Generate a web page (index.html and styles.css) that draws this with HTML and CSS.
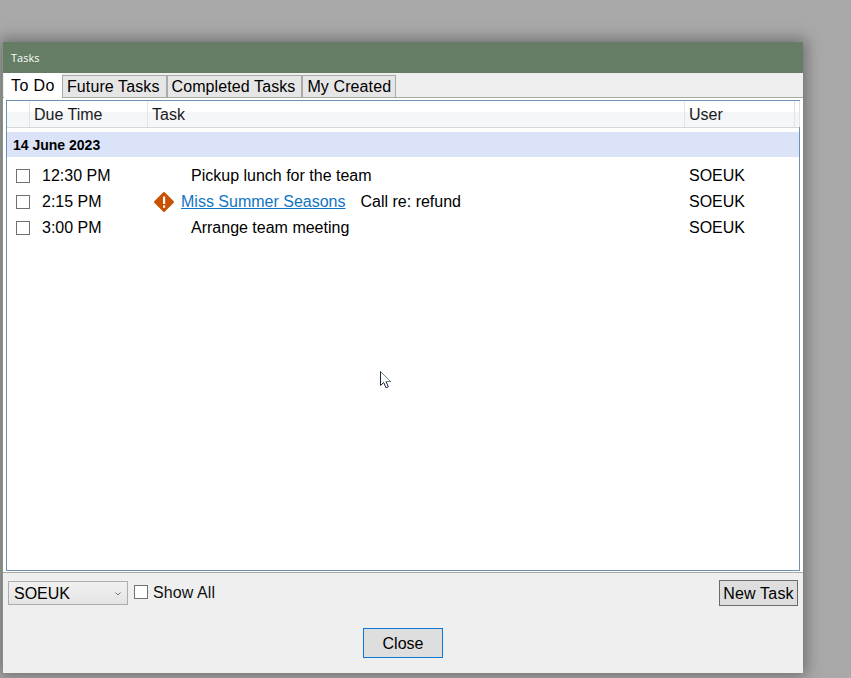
FILE: index.html
```html
<!DOCTYPE html>
<html lang="en">
<head>
<meta charset="utf-8">
<title>Tasks</title>
<link rel="stylesheet" href="styles.css">
</head>
<body>
<section class="window">
  <header class="titlebar">Tasks</header>
  <nav class="tabs">
    <span class="tab tab-active">To Do</span>
    <span class="tab">Future Tasks</span>
    <span class="tab">Completed Tasks</span>
    <span class="tab">My Created</span>
  </nav>
  <div class="panel">
    <div class="list">
      <div class="grid-row head">
        <span class="hcell"></span>
        <span class="hcell">Due Time</span>
        <span class="hcell">Task</span>
        <span class="hcell">User</span>
        <span class="hcell"></span>
      </div>
      <div class="date-row">14 June 2023</div>
      <div class="rows">
        <div class="grid-row task">
          <span class="cell-check"><span class="box"></span></span>
          <span class="cell-time">12:30 PM</span>
          <span class="cell-task indent">Pickup lunch for the team</span>
          <span class="cell-user">SOEUK</span>
        </div>
        <div class="grid-row task">
          <span class="cell-check"><span class="box"></span></span>
          <span class="cell-time">2:15 PM</span>
          <span class="cell-task">
            <svg class="alert" width="20" height="20" viewBox="0 0 20 20" aria-hidden="true">
              <path d="M10 1 19 10 10 19 1 10Z" fill="#ca5100" stroke="#ca5100" stroke-linejoin="round" stroke-width="2"/>
              <rect x="9" y="4.500" width="2.200" height="7.500" fill="#fff"/>
              <rect x="9" y="13.500" width="2.200" height="2.200" fill="#fff"/>
            </svg>
            <a class="link" href="#">Miss Summer Seasons</a>
            <span class="note">Call re: refund</span>
          </span>
          <span class="cell-user">SOEUK</span>
        </div>
        <div class="grid-row task">
          <span class="cell-check"><span class="box"></span></span>
          <span class="cell-time">3:00 PM</span>
          <span class="cell-task indent">Arrange team meeting</span>
          <span class="cell-user">SOEUK</span>
        </div>
      </div>
    </div>
  </div>
  <div class="toolbar">
    <div class="select"><span>SOEUK</span>
      <svg class="chev" width="6" height="4" viewBox="0 0 6 4" aria-hidden="true"><path d="M.5.5 3 3 5.500.5" fill="none" stroke="#777" stroke-width="1"/></svg>
    </div>
    <span class="box box-white"></span>
    <span class="show-all">Show All</span>
    <button class="btn-new" type="button">New Task</button>
  </div>
  <div class="actions">
    <button class="btn-close" type="button">Close</button>
  </div>
</section>
<svg class="cursor" width="14" height="20" viewBox="0 0 14 20" aria-hidden="true">
  <path d="M1.500 1.500V15.500L4.700 12.500 7 17.800 9.300 16.800 7 11.500H11.500Z" fill="#fff" stroke="#1a2340" stroke-width="1"/>
  <path d="M1.500 1.500 11.500 11.500H7" fill="none" stroke="#6f8a70" stroke-width="1"/>
</svg>
</body>
</html>
```
FILE: styles.css
```css
* { box-sizing: border-box; }
html, body { margin: 0; height: 100%; }
body {
  position: relative;
  overflow: hidden;
  background: #a9a9a9;
  font-family: "Liberation Sans", Arial, sans-serif;
  font-size: 16px;
  color: #000;
}
.window {
  position: absolute;
  left: 3px;
  top: 42px;
  width: 800px;
  height: 631px;
  display: flex;
  flex-direction: column;
  background: #efefef;
  box-shadow: -1px 0 0 #7f957f, 0 0 14px 3px rgba(60, 60, 60, .55);
}
.titlebar {
  height: 31px;
  padding: 9px 0 0 8px;
  background: #667d65;
  color: #fbfcfb;
  font-family: "Open Sans", sans-serif;
  font-size: 11px;
  line-height: 14px;
}
.tabs {
  height: 24px;
  padding-left: 1px;
  display: flex;
  align-items: flex-end;
}
.tab {
  height: 22px;
  padding: 0 6px 0 4px;
  line-height: 21px;
  letter-spacing: .1px;
  background: #e6e6e6;
  border: 1px solid #aaa;
  border-bottom: 0;
}
.tab:last-child { padding-right: 4px; }
.tab-active {
  position: relative;
  z-index: 1;
  height: 25px;
  margin-bottom: -1px;
  padding: 0 0 0 7px;
  width: 58px;
  line-height: 25px;
  letter-spacing: .4px;
  background: #fff;
  border: 0;
}
.panel {
  height: 476px;
  padding: 2px 3px;
  background: #fff;
  border-top: 1px solid #a8a8a8;
  border-bottom: 1px solid #a8a8a8;
}
.list {
  height: 471px;
  border: 1px solid #6f8fb3;
  background: #fff;
}
.grid-row {
  display: grid;
  grid-template-columns: 23px 118px 537px 110px 5px;
  align-items: center;
}
.head {
  height: 27px;
  background: linear-gradient(#fff 0, #fff 40%, #f4f5f7 45%, #f6f7f8 100%);
  border-bottom: 1px solid #d6d6d6;
}
.hcell {
  height: 26px;
  padding-left: 4px;
  line-height: 28px;
  color: #1a1a1a;
  border-right: 1px solid #e3e3e3;
}
.date-row {
  height: 25px;
  margin-top: 4px;
  padding-left: 6px;
  line-height: 26px;
  background: #dbe3f9;
  font-size: 14px;
  font-weight: 700;
}
.rows { padding-top: 6px; }
.task { height: 26px; }
.cell-check { padding-left: 9px; display: flex; }
.box {
  display: block;
  width: 14px;
  height: 14px;
  border: 1px solid #707070;
  background: #fff;
}
.cell-time { padding-left: 12px; }
.cell-task {
  display: flex;
  align-items: center;
  padding-left: 6px;
}
.indent { padding-left: 43px; }
.alert { flex: none; }
.link { margin-left: 7px; color: #0f74c4; text-decoration: underline; }
.note { margin-left: 15px; }
.cell-user { padding-left: 4px; }
.toolbar {
  height: 43px;
  padding: 7px 5px 0 5px;
  display: flex;
  align-items: flex-start;
}
.select {
  width: 120px;
  height: 24px;
  margin-top: 1px;
  padding: 1px 6px 0 5px;
  display: flex;
  align-items: center;
  justify-content: space-between;
  border: 1px solid #adadad;
  background: linear-gradient(#f0f0f0, #e4e4e4);
}
.box-white { margin: 5px 0 0 6px; }
.show-all { margin: 1px 0 0 5px; line-height: 24px; letter-spacing: .1px; color: #111; }
.btn-new {
  width: 79px;
  height: 26px;
  margin-left: auto;
  padding: 1px 0 0;
  font: inherit;
  letter-spacing: .2px;
  color: #000;
  background: #dddedd;
  border: 1px solid #6b6b6b;
}
.actions {
  flex: 1;
  display: flex;
  justify-content: center;
  padding-top: 12px;
}
.btn-close {
  width: 80px;
  height: 30px;
  padding: 1px 0 0;
  font: inherit;
  color: #000;
  background: #dddedd;
  border: 1px solid #0a78d4;
}
.cursor { position: absolute; left: 379px; top: 370px; }
```
